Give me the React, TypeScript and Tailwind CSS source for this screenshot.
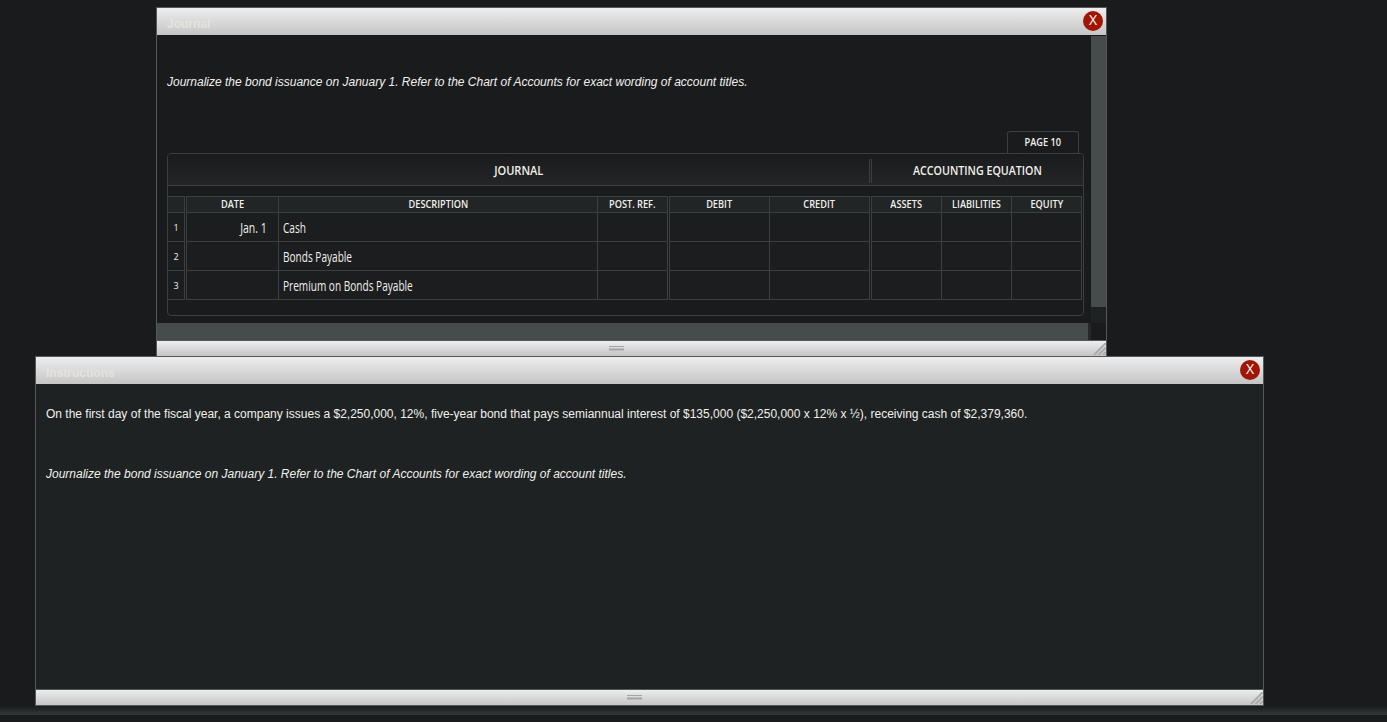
import React from 'react';

type WindowProps = {
  title: string;
  className: string;
  bodyClassName: string;
  gripClassName: string;
  children: React.ReactNode;
};

type JournalRow = {
  date: string;
  description: string;
};

const ROWS: JournalRow[] = [
  { date: 'Jan. 1', description: 'Cash' },
  { date: '', description: 'Bonds Payable' },
  { date: '', description: 'Premium on Bonds Payable' },
];

const GRID = 'grid grid-cols-[17px_2px_92px_319px_70px_2px_100px_100px_2px_70px_70px_70px]';

const Window = ({ title, className, bodyClassName, gripClassName, children }: WindowProps) => (
  <section className={`absolute flex flex-col border border-[#53595b] ${className}`}>
    <header className="flex h-[27px] shrink-0 items-start justify-between bg-linear-to-b from-[#eeeeee] to-[#c5c5c5] pl-[10px] pr-[3px]">
      <h2 className="pt-[8px] text-[12px] leading-[17px] font-bold text-[#e5e3df]">{title}</h2>
      <button className="mt-[3px] flex size-[20px] items-center justify-center rounded-full bg-[#a01604] font-['Open_Sans',sans-serif] text-[14px] leading-none text-white">
        <span className="-mt-[2px]">X</span>
      </button>
    </header>
    <div className={`min-h-0 flex-1 ${bodyClassName}`}>{children}</div>
    <footer className="relative flex h-[16px] shrink-0 border-t border-[#53595b] bg-linear-to-b from-[#eeeeee] to-[#c5c5c5]">
      <div className={`mt-[5px] h-[5px] w-[15px] ${gripClassName}`}>
        <div className="h-px bg-[#a5a5a5]" />
        <div className="mt-px h-[3px] border-y border-[#bcbcbc] bg-[#a5a5a5]" />
      </div>
      <svg className="absolute right-0 bottom-px" width="13" height="12" viewBox="0 0 13 12" fill="none" stroke="#a9a9a9" strokeWidth="1.9">
        <path d="M1 12L13 0M5.5 12L13 4.5M10 12L13 9" />
      </svg>
    </footer>
  </section>
);

const HeadCell = ({ label }: { label?: string }) => (
  <div className="flex items-center justify-center overflow-hidden border-r border-b border-[#3a3f40] bg-[#212525] pb-px text-[10px] leading-none font-semibold whitespace-nowrap">
    <span className="scale-x-[0.92]">{label}</span>
  </div>
);

const Cell = ({ children }: { children?: React.ReactNode }) => (
  <div className="flex items-center border-r border-b border-[#3a3f40] bg-[#1c1d1e] pt-px text-[14px] leading-[20px] font-medium whitespace-nowrap">
    {children}
  </div>
);

// double rule between column groups
const Gap = () => <div className="-mt-px border-r border-[#3a3f40] bg-[#1a1b1c]" />;

const JournalTable = () => (
  <div className="flex flex-col font-['Open_Sans',sans-serif] text-[#f1f0ec]">
    <div className="mr-[5px] flex h-[22px] w-[72px] items-center justify-center self-end rounded-t-[3px] border border-b-0 border-[#3a3f40] text-[10px] font-semibold">
      <span className="scale-x-[0.92]">PAGE 10</span>
    </div>
    <div className="h-[163px] rounded-[4px] border border-[#3a3f40]">
      <div className="flex h-[32px] items-center rounded-t-[3px] border-b border-[#3a3f40] bg-linear-to-b from-[#1a1b1c] to-[#242526] text-[12px] font-semibold">
        <div className="flex w-[701px] justify-center pt-[3px]">
          <span className="scale-x-[0.92]">JOURNAL</span>
        </div>
        <div className="mt-[3px] h-[24px] w-[3px] border-x border-[#3a3f40]" />
        <div className="flex flex-1 justify-center pt-[3px]">
          <span className="scale-x-[0.89]">ACCOUNTING EQUATION</span>
        </div>
      </div>
      <div className="mt-[10px] w-[914px] border-t border-[#3a3f40]">
        <div className={`${GRID} h-[16px]`}>
          <HeadCell />
          <Gap />
          <HeadCell label="DATE" />
          <HeadCell label="DESCRIPTION" />
          <HeadCell label="POST. REF." />
          <Gap />
          <HeadCell label="DEBIT" />
          <HeadCell label="CREDIT" />
          <Gap />
          <HeadCell label="ASSETS" />
          <HeadCell label="LIABILITIES" />
          <HeadCell label="EQUITY" />
        </div>
        {ROWS.map((row, i) => (
          <div key={i} className={`${GRID} h-[29px]`}>
            <Cell><span className="w-full text-center text-[9px]">{i + 1}</span></Cell>
            <Gap />
            <Cell><span className="w-full origin-right scale-x-[0.75] pr-[15px] text-right">{row.date}</span></Cell>
            <Cell><span className="ml-[4px] origin-left scale-x-[0.72]">{row.description}</span></Cell>
            <Cell />
            <Gap />
            <Cell />
            <Cell />
            <Gap />
            <Cell />
            <Cell />
            <Cell />
          </div>
        ))}
      </div>
    </div>
  </div>
);

const App = () => (
  <main className="relative h-[722px] w-[1387px] overflow-hidden bg-[#1a1b1c] font-['Liberation_Sans',Arial,sans-serif] text-[12px] text-[#f1f0ec]">
    <div className="absolute inset-x-0 top-[706px] h-[9px] bg-linear-to-b from-[#1a1b1c] to-[#343939]" />

    <Window
      title="Journal"
      className="top-[7px] left-[156px] h-[350px] w-[951px]"
      bodyClassName="flex flex-col bg-[#1a1b1c]"
      gripClassName="ml-[452px]"
    >
      <div className="flex h-[288px]">
        <div className="w-[934px] pl-[10px] pr-[7px]">
          <p className="h-[96px] pt-[38px] leading-[18px] italic">
            Journalize the bond issuance on January 1. Refer to the Chart of Accounts for exact wording of account titles.
          </p>
          <JournalTable />
        </div>
        <div className="mt-px w-[15px] bg-[#1e2222]">
          <div className="h-[271px] bg-[#464b4c]" />
        </div>
      </div>
      <div className="h-[17px] w-[934px] bg-[#252929]">
        <div className="h-full w-[931px] bg-[#464b4c]" />
      </div>
    </Window>

    <Window
      title="Instructions"
      className="top-[356px] left-[35px] h-[350px] w-[1229px]"
      bodyClassName="bg-[#1e2222] px-[10px]"
      gripClassName="ml-[591px]"
    >
      <p className="pt-[21px] leading-[18px]">
        On the first day of the fiscal year, a company issues a $2,250,000, 12%, five-year bond that pays semiannual interest of $135,000 ($2,250,000 x 12% x ½), receiving cash of $2,379,360.
      </p>
      <p className="mt-[42px] leading-[18px] italic">
        Journalize the bond issuance on January 1. Refer to the Chart of Accounts for exact wording of account titles.
      </p>
    </Window>
  </main>
);

export default App;
